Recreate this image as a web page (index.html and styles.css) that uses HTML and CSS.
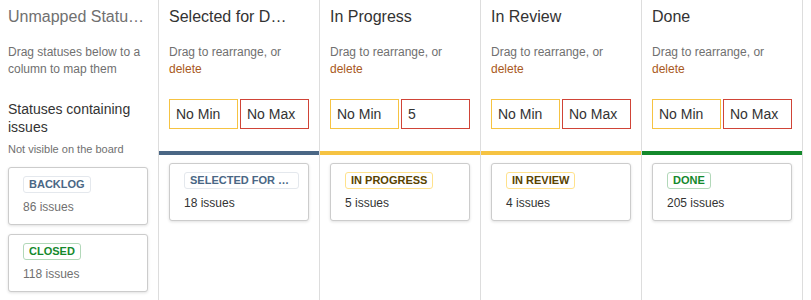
FILE: index.html
```html
<!DOCTYPE html>
<html lang="en">
  <head>
    <meta charset="UTF-8" />
    <meta name="viewport" content="width=device-width, initial-scale=1.0" />
    <title>Column Mapping</title>
    <link rel="stylesheet" href="styles.css">
  </head>
  <body>
    <div class="board">
      <!-- unmapped statuses -->
      <div class="column column-unmapped">
        <div class="column-head">
          <h2 class="column-title">Unmapped Statuses</h2>
          <p class="column-desc">Drag statuses below to a column to map them</p>
          <h3 class="section-title">Statuses containing issues</h3>
          <p class="section-note">Not visible on the board</p>
        </div>
        <div class="column-body">
          <div class="status-card">
            <span class="lozenge lozenge-blue">Backlog</span>
            <div class="issue-count">86 issues</div>
          </div>
          <div class="status-card">
            <span class="lozenge lozenge-green">Closed</span>
            <div class="issue-count">118 issues</div>
          </div>
        </div>
      </div>

      <div class="column">
        <div class="column-head">
          <h2 class="column-title">Selected for Development</h2>
          <p class="column-desc">Drag to rearrange, or <a href="#" class="delete-link">delete</a></p>
          <div class="limits">
            <input class="limit limit-min" type="text" placeholder="No Min">
            <input class="limit limit-max" type="text" placeholder="No Max">
          </div>
        </div>
        <div class="column-bar bar-blue"></div>
        <div class="column-body">
          <div class="status-card">
            <span class="lozenge lozenge-blue">Selected for Development</span>
            <div class="issue-count">18 issues</div>
          </div>
        </div>
      </div>

      <div class="column">
        <div class="column-head">
          <h2 class="column-title">In Progress</h2>
          <p class="column-desc">Drag to rearrange, or <a href="#" class="delete-link">delete</a></p>
          <div class="limits">
            <input class="limit limit-min" type="text" placeholder="No Min">
            <input class="limit limit-max" type="text" placeholder="No Max" value="5">
          </div>
        </div>
        <div class="column-bar bar-yellow"></div>
        <div class="column-body">
          <div class="status-card">
            <span class="lozenge lozenge-yellow">In Progress</span>
            <div class="issue-count">5 issues</div>
          </div>
        </div>
      </div>

      <div class="column">
        <div class="column-head">
          <h2 class="column-title">In Review</h2>
          <p class="column-desc">Drag to rearrange, or <a href="#" class="delete-link">delete</a></p>
          <div class="limits">
            <input class="limit limit-min" type="text" placeholder="No Min">
            <input class="limit limit-max" type="text" placeholder="No Max">
          </div>
        </div>
        <div class="column-bar bar-yellow"></div>
        <div class="column-body">
          <div class="status-card">
            <span class="lozenge lozenge-yellow">In Review</span>
            <div class="issue-count">4 issues</div>
          </div>
        </div>
      </div>

      <div class="column">
        <div class="column-head">
          <h2 class="column-title">Done</h2>
          <p class="column-desc">Drag to rearrange, or <a href="#" class="delete-link">delete</a></p>
          <div class="limits">
            <input class="limit limit-min" type="text" placeholder="No Min">
            <input class="limit limit-max" type="text" placeholder="No Max">
          </div>
        </div>
        <div class="column-bar bar-green"></div>
        <div class="column-body">
          <div class="status-card">
            <span class="lozenge lozenge-green">Done</span>
            <div class="issue-count">205 issues</div>
          </div>
        </div>
      </div>
    </div>
  </body>
</html>
```

FILE: styles.css
```css
body {
  font-family: "Liberation Sans", Arial, sans-serif;
  margin: 0;
  padding: 0;
  background: #fff;
  color: #333;
}

.board {
  display: flex;
  height: 300px;
  overflow: hidden;
}

.column {
  box-sizing: border-box;
  width: 161px;
  flex: none;
  border-right: 1px solid #ddd;
  display: flex;
  flex-direction: column;
}

.column-head {
  padding: 7px 10px 0;
}

.column-unmapped {
  width: 159px;
}

.column-unmapped .column-head,
.column-unmapped .column-body {
  padding-left: 8px;
}

.column-title {
  margin: 0;
  font-size: 16px;
  font-weight: normal;
  line-height: 20px;
  color: #333;
  padding-right: 20px;
  white-space: nowrap;
  overflow: hidden;
  text-overflow: ellipsis;
}

.column-unmapped .column-title {
  color: #707070;
  padding-right: 0;
}

.column-desc {
  margin: 17px 0 0;
  font-size: 12px;
  line-height: 17px;
  color: #707070;
}

.delete-link {
  color: #a9591c;
  text-decoration: none;
}

.section-title {
  margin: 22px 0 0;
  font-size: 14px;
  font-weight: normal;
  line-height: 18px;
  color: #333;
}

.section-note {
  margin: 6px 0 0;
  font-size: 11px;
  line-height: 14px;
  color: #707070;
}

.limits {
  display: flex;
  gap: 2px;
  margin-top: 21px;
}

.limit {
  box-sizing: border-box;
  width: 69px;
  height: 30px;
  margin: 0;
  padding: 0 6px;
  border: 1px solid;
  border-radius: 0;
  font-family: inherit;
  font-size: 14px;
  color: #333;
  background: #fff;
  outline: none;
}

.limit::placeholder {
  color: #333;
  opacity: 1;
}

.limit-min {
  border-color: #f6c342;
}

.limit-max {
  border-color: #d04437;
}

.column-bar {
  height: 4px;
  margin-top: 22px;
}

.bar-blue {
  background: #4a6785;
}

.bar-yellow {
  background: #f6c342;
}

.bar-green {
  background: #14892c;
}

.column-body {
  padding: 8px 10px 0;
  display: flex;
  flex-direction: column;
  gap: 9px;
}

.column-unmapped .column-body {
  padding-top: 11px;
}

.status-card {
  box-sizing: border-box;
  height: 58px;
  padding: 8px 14px 0;
  border: 1px solid #ccc;
  border-radius: 3px;
  background: #fff;
  box-shadow: 0 1px 3px rgba(0, 0, 0, 0.12);
}

.lozenge {
  display: inline-block;
  box-sizing: border-box;
  max-width: 115px;
  padding: 0 5px;
  border: 1px solid;
  border-radius: 3px;
  font-size: 11px;
  font-weight: bold;
  line-height: 15px;
  text-transform: uppercase;
  white-space: nowrap;
  overflow: hidden;
  text-overflow: ellipsis;
  vertical-align: top;
}

.lozenge-blue {
  color: #4a6785;
  border-color: #e4e8ed;
}

.lozenge-yellow {
  color: #594300;
  border-color: #ffe28c;
}

.lozenge-green {
  color: #14892c;
  border-color: #b2d8b9;
}

.issue-count {
  margin-top: 4px;
  font-size: 12px;
  line-height: 18px;
  color: #333;
}

.column-unmapped .issue-count {
  color: #707070;
}
```
